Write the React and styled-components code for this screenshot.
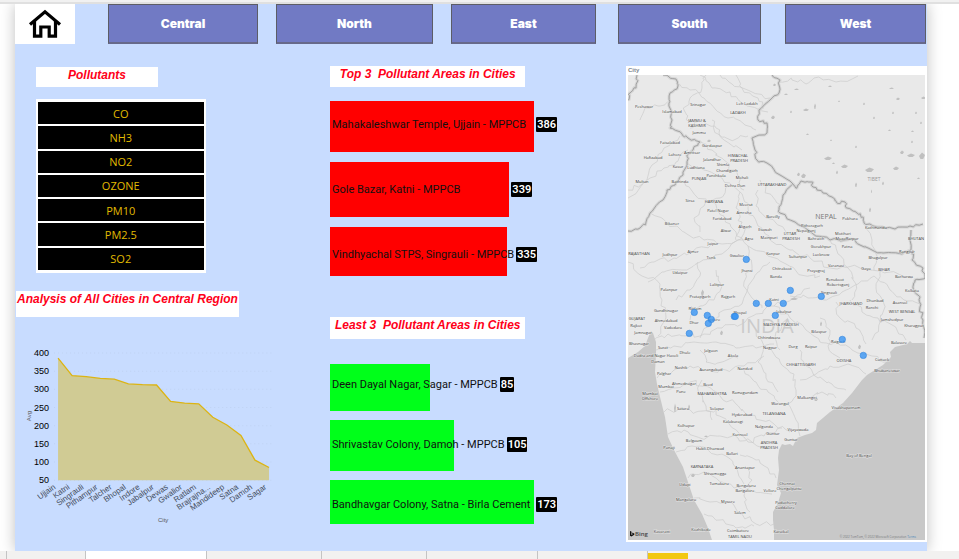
import React from "react";
import styled, { createGlobalStyle } from "styled-components";

const GlobalStyle = createGlobalStyle`
  *, *::before, *::after { box-sizing: border-box; }
  body { margin: 0; background: #ffffff; font-family: "Liberation Sans", Arial, sans-serif; }
  button { font: inherit; margin: 0; padding: 0; cursor: pointer; }
`;

const Page = styled.div`
  display: flex;
  flex-direction: column;
  min-height: 100vh;
  overflow: hidden;
`;

const TopEdge = styled.div`
  height: 4px;
  background: #f1f1f1;
  border-bottom: 2px solid #e0e0e0;
  position: relative;
  z-index: 1;
`;

const Report = styled.main`
  flex: 1;
  margin: 0 32px 0 15px;
  padding-bottom: 9px;
  background: #c8dcff;
  box-shadow: 0 0 14px rgba(0, 0, 0, 0.25);
`;

const RegionNav = styled.nav`
  display: grid;
  grid-template-columns: 60fr 33fr 150fr 18fr 157fr 18fr 145fr 22fr 143fr 24fr 141fr 1fr;
  height: 40px;
  margin-bottom: 22px;
`;

const HomeButton = styled.button`
  display: flex;
  align-items: center;
  justify-content: center;
  grid-column: 1;
  background: #ffffff;
  border: 0;
`;

const RegionButton = styled.button`
  grid-column: ${(p) => p.$column};
  background: #717ac4;
  border: 1px solid #5c5d66;
  border-bottom: 2px solid #67698a;
  color: #ffffff;
  font: 900 12px Inter, "Liberation Sans", sans-serif;
`;

const Columns = styled.div`
  display: grid;
  grid-template-columns: 315fr 296fr 301fr;
  align-items: start;
`;

const LeftColumn = styled.section`
  display: flex;
  flex-direction: column;
  align-items: flex-start;
  padding-left: 1px;
`;

const SlicerGroup = styled.div`
  display: flex;
  flex-direction: column;
  gap: 12px;
  width: 54%;
  margin: 1px 0 18px 20px;
`;

const Heading = styled.h2`
  width: ${(p) => p.$width};
  height: ${(p) => p.$height};
  margin: 0;
  padding-top: 1px;
  background: #ffffff;
  color: #ff0019;
  font: italic bold 12px/14px "Liberation Sans", Arial, sans-serif;
  text-align: center;
  white-space: pre;
`;

const Slicer = styled.div`
  display: grid;
  grid-auto-rows: 1fr;
  gap: 2px;
  height: 174px;
  padding: 3px 2px;
  background: #ffffff;
`;

const SlicerItem = styled.button`
  background: #000000;
  border: 0;
  color: #e2bb00;
  font: 11px "Open Sans", "Noto Sans", sans-serif;
`;

const AreaChart = styled.svg`
  display: block;
  width: 84.5%;
  height: auto;
  margin-top: 24px;
  font-family: "Liberation Sans", Arial, sans-serif;
`;

const BarGroup = styled.div`
  margin-bottom: ${(p) => p.$after};
`;

const BarViewport = styled.div`
  height: ${(p) => p.$height};
  margin-top: ${(p) => p.$before};
  overflow: hidden;
`;

const BarList = styled.ul`
  display: grid;
  grid-auto-rows: ${(p) => p.$pitch};
  margin: -9px 0 0;
  padding: 0;
  list-style: none;
`;

const BarRow = styled.li`
  display: grid;
  align-items: center;
  font: 11px/16px Roboto, "Open Sans", sans-serif;
  white-space: nowrap;
`;

const Bar = styled.div`
  grid-area: 1 / 1;
  width: ${(p) => p.$share}%;
  height: calc(100% - ${(p) => p.$space});
  background: ${(p) => p.$color};
`;

const BarContent = styled.div`
  grid-area: 1 / 1;
  justify-self: start;
  display: flex;
  justify-content: space-between;
  gap: 2px;
  min-width: calc(${(p) => p.$share}% + 2px);
  padding-left: 2px;
`;

const BadgeSlot = styled.span`
  width: 0;
`;

const Badge = styled.span`
  display: inline-block;
  padding: 0 1px;
  border-radius: 1px;
  background: #000000;
  color: #ffffff;
  font-weight: 600;
  line-height: 15px;
`;

const BarLabel = styled.span`
  color: #111111;
`;

const MapCard = styled.section`
  padding: 0 2px 2px;
  background: #ffffff;
`;

const MapTitle = styled.h2`
  height: 9px;
  margin: 0;
  color: #808890;
  font: bold 6px/9px "Liberation Sans", Arial, sans-serif;
`;

const MapDrawing = styled.svg`
  display: block;
  width: 100%;
  height: auto;
  font-family: "Open Sans", "Noto Sans", sans-serif;
`;

const PageTabs = styled.footer`
  display: grid;
  grid-template-columns: 7fr 79fr 121fr 115fr 105fr 111fr 110fr 40fr 271fr;
  height: 8px;
  background: #f2f1f0;
  position: relative;
  z-index: 1;
`;

const PageTab = styled.span`
  margin-top: ${(p) => (p.$accent ? "2px" : "0")};
  background: ${(p) => p.$fill || "transparent"};
  border-right: ${(p) => (p.$last ? "0" : "1px solid #c4c4c4")};
`;

const regions = [
  ["Central", 3],
  ["North", 5],
  ["East", 7],
  ["South", 9],
  ["West", 11],
];

const pollutants = ["CO", "NH3", "NO2", "OZONE", "PM10", "PM2.5", "SO2"];

const topAreas = [
  ["Mahakaleshwar Temple, Ujjain - MPPCB", 386],
  ["Gole Bazar, Katni - MPPCB", 339],
  ["Vindhyachal STPS, Singrauli - MPPCB", 335],
];

const leastAreas = [
  ["Deen Dayal Nagar, Sagar - MPPCB", 85],
  ["Shrivastav Colony, Damoh - MPPCB", 105],
  ["Bandhavgar Colony, Satna - Birla Cement", 173],
];

const cityAverages = [
  ["Ujjain", 386], ["Katni", 338], ["Singrauli", 335], ["Pithampur", 330],
  ["Talcher", 328], ["Bhopal", 315], ["Indore", 313], ["Jabalpur", 312],
  ["Dewas", 267], ["Gwalior", 262], ["Ratlam", 260], ["Brajrajna...", 223],
  ["Mandideep", 202], ["Satna", 173], ["Damoh", 105], ["Sagar", 85],
];

function BarChart({ rows, color, pitch, space, height, before }) {
  const max = Math.max(...rows.map((r) => r[1]));
  return (
    <BarViewport $height={height} $before={before}>
      <BarList $pitch={pitch}>
        {rows.map(([name, value]) => {
          const share = (value / max) * 69;
          return (
            <BarRow key={name}>
              <Bar $share={share} $space={space} $color={color} />
              <BarContent $share={share}>
                <BarLabel>{name}</BarLabel>
                <BadgeSlot><Badge>{value}</Badge></BadgeSlot>
              </BarContent>
            </BarRow>
          );
        })}
      </BarList>
    </BarViewport>
  );
}

function CityChart() {
  const x = (i) => 42 + i * 14.05;
  const y = (v) => 12 + ((400 - v) * 127) / 350;
  const line = cityAverages.map(([, v], i) => `${x(i)},${y(v)}`).join(" ");
  return (
    <AreaChart viewBox="0 0 265 190" role="img" aria-label="Avg by City">
      {[400, 350, 300, 250, 200, 150, 100, 50].map((v) => (
        <g key={v}>
          <line x1="38" x2="258" y1={y(v)} y2={y(v)} stroke="#bfd2f2" strokeDasharray="1 3" />
          <text x="33" y={y(v) + 3} fontSize="9" textAnchor="end" fill="#000">{v}</text>
        </g>
      ))}
      <polygon points={`${x(0)},139 ${line} ${x(15)},139`} fill="#d0cb94" />
      <polyline points={line} fill="none" stroke="#dcb414" strokeWidth="1.3" />
      {cityAverages.map(([name], i) => (
        <text key={name} fontSize="8" fill="#444c5c" textAnchor="end"
          transform={`translate(${x(i) - 2} 147) rotate(-35)`}>{name}</text>
      ))}
      <text x="147" y="181" fontSize="6" textAnchor="middle" fill="#555">City</text>
      <text transform="translate(15 75) rotate(-90)" fontSize="6" textAnchor="middle" fill="#555">Avg</text>
    </AreaChart>
  );
}

const coastWest = "628,358 638,352 645,346 648,338 651,331 653,333 656,342 656,355 655,372 657,384 660,397 662,405 665,417 668,437 674,450 683,467 689,485 694,500 702,514 708,528 712,540 628,540";
const coastEast = "925,343 912,343 910,341 907,344 895,347 890,352 891,357 883,365 875,370 867,375 862,380 852,393 843,403 830,412 817,423 816,430 812,433 805,435 797,438 793,446 790,444 785,445 782,444 779,450 778,458 779,470 777,485 781,493 778,503 773,512 773,520 774,530 774,540 925,540";

const frontiers = [
  [663,75, 676,79, 678,86, 670,93, 669,103, 672,120, 670,128, 682,134, 688,138, 700,142, 693,150, 687,155, 687,163, 683,175, 675,185, 667,190, 663,200, 650,213, 646,222, 640,228, 628,231],
  [772,75, 780,80, 779,93, 770,100, 759,110, 758,120, 767,123, 767,133, 752,138, 755,150, 757,160, 767,163, 780,175, 793,184, 783,195, 779,207, 780,213, 795,222, 812,233, 830,240, 852,239, 860,245, 872,250, 883,253, 902,254, 911,250, 911,230],
  [793,184, 797,188, 801,181, 812,182, 813,187, 823,193, 832,197, 837,203, 845,202, 847,208, 857,213, 863,217, 864,223, 877,227, 895,229, 910,226, 923,224],
  [913,250, 912,260, 923,268, 925,278, 915,280, 913,288, 920,297, 920,307, 923,320, 924,338],
  [637,75, 636,88, 630,93, 628,100],
];

const faintLines = [
  [628,190, 642,184, 652,165, 664,148, 680,136],
  [628,198, 650,178, 664,168, 676,162, 688,150],
  [640,120, 645,108, 660,106, 670,100],
  [676,82, 690,90, 704,98, 716,110, 728,118, 744,124, 756,130],
  [700,75, 712,88, 730,92, 744,104, 768,112],
  [720,75, 732,84, 752,92, 770,98],
  [780,82, 792,80, 806,84, 814,78, 836,82, 858,76],
  [690,128, 702,120, 716,128, 724,140, 742,150],
  [700,142, 712,150, 724,160, 738,176, 744,190],
  [687,163, 704,170, 722,178, 740,192, 748,208, 758,226, 770,240, 790,250, 810,258, 830,268, 852,266, 868,270, 890,272, 912,278],
  [684,181, 696,196, 712,202, 724,216, 736,232, 748,246, 768,256, 786,264, 806,276, 820,276],
  [650,213, 668,224, 684,232, 704,240, 722,244, 746,240],
  [640,268, 654,262, 674,258, 692,252, 712,244],
  [648,282, 664,272, 682,270, 700,262, 722,254, 738,240, 750,228],
  [628,262, 642,276, 660,284, 662,300, 666,318, 658,336],
  [652,342, 668,334, 688,336, 704,334, 722,328, 742,324, 756,314, 774,306, 794,298, 810,288],
  [656,350, 674,346, 694,342, 716,342, 736,348, 756,348, 774,344],
  [676,300, 690,290, 700,276, 698,262],
  [700,338, 712,322, 724,310, 742,304, 748,288, 758,272, 770,262],
  [748,246, 752,266, 744,282, 752,298, 762,308],
  [774,306, 790,318, 806,330, 820,342, 836,342, 852,350, 872,356, 886,362],
  [790,296, 808,298, 824,300, 842,292, 858,284, 874,276, 890,290, 904,300, 920,304],
  [850,300, 862,312, 878,318, 894,326, 906,340],
  [830,240, 838,254, 848,268, 856,284, 852,300],
  [864,222, 872,240, 876,254, 874,270],
  [800,350, 806,366, 818,378, 832,384, 846,390],
  [770,348, 780,362, 794,374, 796,390, 788,404, 796,420, 800,436],
  [657,378, 674,370, 690,366, 708,370, 726,370, 744,366, 764,356],
  [660,392, 674,388, 690,382, 706,386, 720,396, 736,404, 746,414, 760,420, 774,424, 790,432],
  [664,412, 680,408, 696,412, 716,410, 726,420, 738,432, 748,442, 764,436, 782,428],
  [668,434, 684,430, 700,438, 720,436, 738,438, 752,442, 768,448],
  [676,452, 692,446, 708,450, 726,456, 736,468, 744,484],
  [688,478, 704,472, 718,480, 734,488, 750,490, 772,494],
  [694,498, 710,502, 728,502, 742,514, 756,524, 774,524],
  [704,514, 720,520, 736,528, 754,526],
  [712,420, 706,406, 698,394, 702,380],
  [744,370, 756,382, 768,392, 780,404],
  [800,380, 816,374, 830,366, 848,364, 866,374],
  [810,398, 822,392, 836,398],
  [820,318, 830,330, 828,346, 840,358],
  [756,330, 764,346, 758,362, 766,378, 778,392],
  [740,455, 756,460, 768,468, 776,478],
  [700,232, 694,218, 704,206, 720,198, 728,186],
  [760,180, 770,194, 782,206],
  [748,468, 752,480, 744,496, 750,512],
  [706,75, 702,88, 690,98, 684,110, 690,122],
  [736,75, 742,88, 758,98, 764,108],
  [712,120, 718,134, 734,140, 748,136],
  [740,192, 736,208, 742,222, 736,240],
  [758,190, 756,206, 766,218, 786,232],
  [690,320, 700,306, 714,300, 722,286, 716,270],
  [880,270, 876,288, 884,304, 880,322, 872,340],
  [836,302, 840,318, 856,328, 866,344],
  [780,350, 776,332, 788,318],
  [700,350, 706,362, 722,362, 738,358],
];

const placeNames = [
  ["Peshawar",644,107],["Islamabad",672,112],["Srinagar",698,105],["Leh Ladakh",747,104],["LADAKH",738,113],
  ["JAMMU &",697,121],["KASHMIR",697,126],["Jammu",699,133],["Faisalabad",670,143],["Gurdaspur",712,146],
  ["Hafizabad",653,158],["Lahore",675,155],["Amritsar",692,153],["Jalandhar",712,160],["HIMACHAL",738,156],["PRADESH",739,161],
  ["Shimla",723,165],["Kasur",678,167],["Ludhiana",696,168],["Panchkula",716,176],["Chandigarh",727,171],["PUNJAB",699,179],["Mohali",742,178],
  ["Multan",642,182],["Bathinda",680,182],["Dehra Dun",735,186],["UTTARAKHAND",772,185],["Sirsa",690,201],["HARYANA",714,202],
  ["Meerut",746,205],["Patel Nagar",718,211],["Amroha",744,213],["Faridabad",722,219],["Bareilly",773,217],
  ["Bikaner",672,224],["Alwar",726,231],["Aligarh",745,227],["Etawah",765,230],["Mainpuri",769,238],["Agra",749,239],["Kanpur",773,254],
  ["Jaipur",713,244],["Ajmer",693,252],["Jodhpur",670,255],["RAJASTHAN",639,254],["Tonk",711,258],["Gwalior",737,256],["Jhansi",747,271],
  ["Udaipur",680,273],["Banda",776,277],["Chitrakoot",782,269],["Lalitpur",717,285],["Palanpur",669,290],["Pratapgarh",700,297],["Rajgarh",728,297],["Katni",774,300],
  ["Gandhinagar",666,311],["Ratlam",695,309],["Bhopal",740,313],["Jabalpur",784,312],["Ahmedabad",666,321],["Vadodara",673,328],["GUJARAT",637,319],
  ["Rajkot",636,326],["Jamnagar",643,333],["Bhavnagar",639,344],["Dhar",694,323],["Indore",714,320],["MADHYA PRADESH",781,325],["Chhindwara",769,338],["Nagpur",770,348],
  ["Surat",663,348],["Dadra and Nagar Haveli",656,356],["Daman",658,362],["Dhule",685,353],["Jalgaon",711,351],["Akola",733,356],["Nanded",745,369],["Aurangabad",711,370],["Nashik",681,368],
  ["Palghar",664,374],["Mumbai",666,387],["Ahmednagar",684,384],["Beed",708,385],["Pune",681,392],["MAHARASHTRA",712,394],["Ramagundam",745,393],["Mumbai",650,394],["Offshore",650,399],
  ["Warangal",780,404],["Satara",683,409],["Solapur",717,409],["Hyderabad",742,415],["TELANGANA",774,414],["Kalaburagi",733,422],["Nalgonda",764,427],["Kolhapur",686,426],["Kurnool",740,435],
  ["Guntur",773,434],["ANDHRA",769,443],["PRADESH",769,448],["Belgaum",694,441],["Hubli-Dharwad",710,449],["Panaji",669,448],["Ballari",732,454],["KARNATAKA",702,467],["Anantapur",745,468],
  ["Shivamogga",715,474],["Tumakuru",719,484],["Bengaluru",746,486],["Bangalore",745,491],["Vellore",770,491],["Udupi",685,485],["Mangaluru",686,500],["Mysore",728,502],["Salem",740,513],
  ["Kozhikode",701,530],["Coimbatore",738,531],["TAMIL NADU",740,537],["Kavaratti",662,532],["Chennai",787,484],["Chengalpattu",789,489],["Puducherry",786,503],["Cuddalore",785,508],["Karaikal",781,532],
  ["Pokhara",850,219],["Kathmandu",876,228],["BHUTAN",916,239],["Pithoragarh",812,226],["Nepalganj",806,231],["UTTAR",790,234],["PRADESH",791,239],["Bahraich",816,239],["Motihari",843,234],["Muzaffarpur",847,239],
  ["Gorakhpur",821,247],["Patna",847,247],["Rangpur",907,252],["Lucknow",821,255],["Bhagalpur",878,258],["Sultanpur",798,257],["Varanasi",836,266],["Gaya",866,269],["BIHAR",884,270],["Prayagraj",816,271],["Barharwa",904,277],
  ["Renukoot",835,280],["Robertsganj",838,285],["Kolkata",912,291],["Singrauli",829,293],["Dhanbad",875,301],["Asansol",900,303],["JHARKHAND",851,304],["Ranchi",872,308],["WEST BENGAL",902,312],["Jamshedpur",892,320],["Kharagpur",914,326],
  ["Bilaspur",819,332],["Durg",793,347],["Raipur",811,347],["Raigarh",838,342],["Balasore",899,343],["CHHATTISGARH",801,365],["ODISHA",844,361],["Cuttack",882,360],["Bhubaneswar",887,371],
  ["Malkangiri",807,398],["Visakhapatnam",846,408],["Vijayawada",798,430],["Guntur",791,440],["Bay of Bengal",859,456],
];

const lakes = [
  [794,89,5,1],[828,86,4,1],[803,109,6,2],[790,111,2,2],[814,104,2,5],[838,101,2,1],[889,88,5,1],[896,98,4,2],[863,103,2,2],[892,112,2,2],
  [915,112,2,2],[921,97,5,2],[873,117,2,2],[888,130,3,1],[911,131,3,1],[806,134,3,1],[830,140,2,1],[855,146,2,2],[824,157,8,3],[832,163,3,1],
  [841,165,7,3],[865,168,9,4],[900,151,4,3],[907,154,8,3],[919,153,6,6],[893,167,6,3],[801,174,5,4],[797,173,3,3],[836,171,2,3],[882,182,2,3],
  [855,183,2,4],[871,190,1,3],[869,208,2,4],[911,141,2,2],[917,178,3,1],[920,122,2,2],[784,94,4,1],[773,84,3,2],[771,116,4,3],
  [701,290,3,6],[690,307,3,2],[688,405,2,5],[720,331,3,4],[790,298,8,2],[820,322,2,4],[858,345,3,4],[691,474,4,3],[674,404,2,8],[707,140,4,2],[704,436,4,1],[814,398,4,3],
];

const pins = [
  [746,259],[790,290],[821,296],[756,303],[768,303],[783,303],[775,315],[694,312],[707,315],[711,319],
  [708,323],[734,316],[735,316],[689,333],[842,339],[863,355],
];

/* Adds small irregular bends between the given points of a line. */
function winding(points, amount) {
  let seed = points[0] * 13 + points[1] * 7;
  const next = () => {
    seed = (seed * 9301 + 49297) % 233280;
    return seed / 233280 - 0.5;
  };
  const out = [`${points[0]},${points[1]}`];
  for (let i = 2; i < points.length; i += 2) {
    const [x0, y0, x1, y1] = points.slice(i - 2, i + 2);
    for (let t = 1; t <= 4; t++) {
      const k = t / 4;
      const j = t === 4 ? 0 : amount;
      out.push(`${(x0 + (x1 - x0) * k + next() * j).toFixed(1)},${(y0 + (y1 - y0) * k + next() * j).toFixed(1)}`);
    }
  }
  return out.join(" ");
}

function CityMap() {
  return (
    <MapDrawing viewBox="628 75 297 465" role="img" aria-label="City">
      <rect x="628" y="75" width="297" height="465" fill="#e9e9e9" />
      {faintLines.map((l, i) => (
        <polyline key={i} points={winding(l, 5)} fill="none" stroke="#cbcbcb" strokeWidth="0.7" />
      ))}
      {lakes.map(([x, y, w, h], i) => (
        <polygon key={i} points={`${x},${y + h / 2} ${x + w / 2},${y - 0.5} ${x + w},${y + h / 3} ${x + w * 0.7},${y + h} ${x + w / 4},${y + h}`} fill="#c0c0c0" />
      ))}
      <polygon points={coastWest} fill="#c8c8c8" />
      <polygon points={coastEast} fill="#c8c8c8" />
      {frontiers.map((l, i) => (
        <g key={i} fill="none" strokeLinejoin="round">
          <polyline points={winding(l, 3)} stroke="#d6d6d6" strokeWidth="3" />
          <polyline points={winding(l, 3)} stroke="#a2a2a2" strokeWidth="1" />
        </g>
      ))}
      <text x="767" y="333" fontSize="20" textAnchor="middle" fill="#cbcbcb">INDIA</text>
      <text x="826" y="219" fontSize="7" textAnchor="middle" fill="#777">NEPAL</text>
      <text x="874" y="181" fontSize="5" textAnchor="middle" fill="#999">TIBET</text>
      <g fontSize="4" textAnchor="middle" fill="#3c3c3c" stroke="#f1f1f1" strokeWidth="1" strokeOpacity="0.6" paintOrder="stroke">
        {placeNames.map(([name, x, y]) => (
          <text key={`${name}${x}${y}`} x={x} y={y + 1}>{name}</text>
        ))}
      </g>
      {pins.map(([x, y]) => (
        <circle key={`${x}-${y}`} cx={x + 0.3} cy={y + 0.4} r="3.2" fill="#3593f5" fillOpacity="0.78" stroke="#3384dc" strokeWidth="0.6" />
      ))}
      <path d="M630 531l1.4.6v3.4l1.6-.9-.9-.5-.4-1.2 2.6 1v1.3l-2.9 1.8-1.4-.8z" fill="#111" />
      <text x="635" y="536" fontSize="6" fontWeight="600" fill="#444">Bing</text>
      <text x="916" y="538" fontSize="3" textAnchor="end" fill="#77797c">© 2022 TomTom, © 2022 Microsoft Corporation <tspan fill="#4c86b8">Terms</tspan></text>
    </MapDrawing>
  );
}

export default function App() {
  return (
    <Page>
      <GlobalStyle />
      <TopEdge />
      <Report>
        <RegionNav>
          <HomeButton aria-label="Home">
            <svg width="34" height="30" viewBox="0 0 34 30" fill="none" stroke="#000" strokeWidth="3.2">
              <path d="M2 15.500L17 2.800l15 12.700" />
              <path d="M6.500 12v15.200h6.300V18h8.400v9.200h6.300V12" />
            </svg>
          </HomeButton>
          {regions.map(([name, column]) => (
            <RegionButton key={name} $column={column}>{name}</RegionButton>
          ))}
        </RegionNav>
        <Columns>
          <LeftColumn>
            <SlicerGroup>
              <Heading $width="72%" $height="20px">Pollutants</Heading>
              <Slicer>
                {pollutants.map((p) => <SlicerItem key={p}>{p}</SlicerItem>)}
              </Slicer>
            </SlicerGroup>
            <Heading $width="71%" $height="26px">Analysis of All Cities in Central Region</Heading>
            <CityChart />
          </LeftColumn>
          <section>
            <BarGroup $after="41px">
              <Heading $width="66%" $height="21px">{"Top 3  Pollutant Areas in Cities"}</Heading>
              <BarChart rows={topAreas} color="#ff0000" pitch="65px" space="10px" height="175px" before="14px" />
            </BarGroup>
            <BarGroup $after="0">
              <Heading $width="66%" $height="22px">{"Least 3  Pollutant Areas in Cities"}</Heading>
              <BarChart rows={leastAreas} color="#00ff1a" pitch="60px" space="9px" height="160px" before="25px" />
            </BarGroup>
          </section>
          <MapCard>
            <MapTitle>City</MapTitle>
            <CityMap />
          </MapCard>
        </Columns>
      </Report>
      <PageTabs>
        <PageTab />
        <PageTab />
        <PageTab $fill="#ffffff" />
        <PageTab />
        <PageTab />
        <PageTab />
        <PageTab />
        <PageTab $fill="#f2c811" $accent $last />
        <PageTab $last />
      </PageTabs>
    </Page>
  );
}
